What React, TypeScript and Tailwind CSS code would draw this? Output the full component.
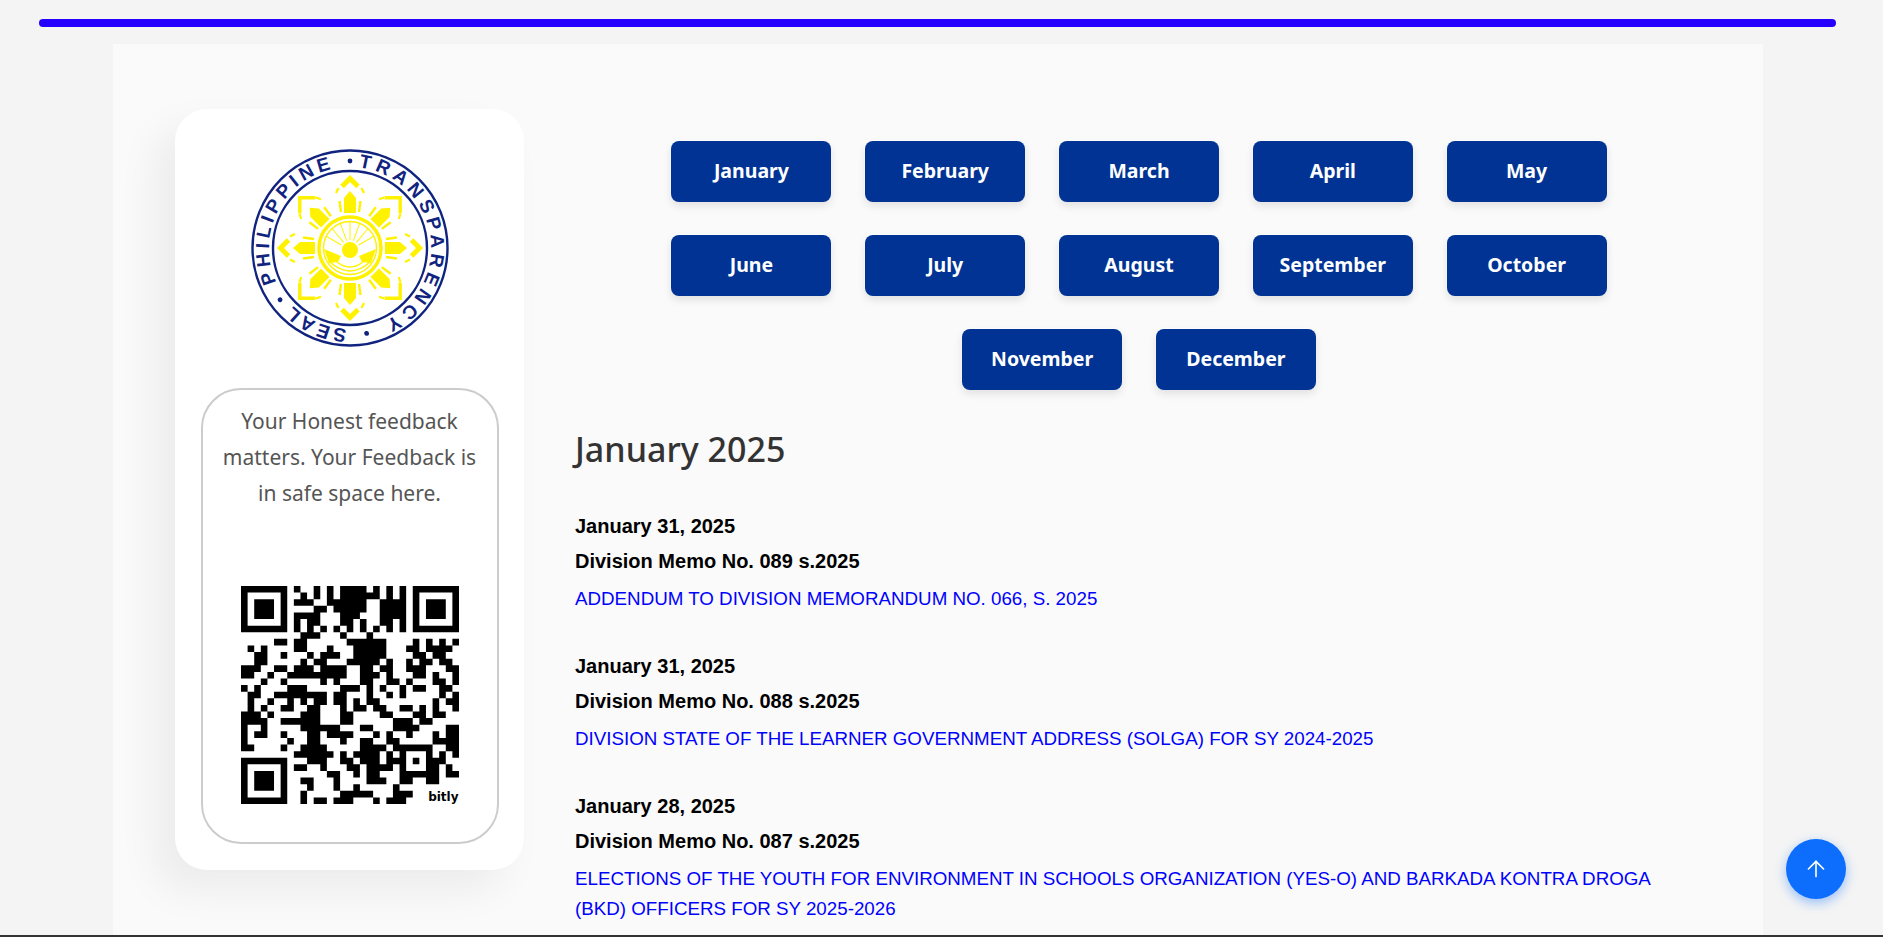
import { ArrowUp } from "lucide-react";

const months = ["January", "February", "March", "April", "May", "June", "July", "August", "September", "October", "November", "December"];

const memos = [
  { date: "January 31, 2025", no: "Division Memo No. 089 s.2025", title: "ADDENDUM TO DIVISION MEMORANDUM NO. 066, S. 2025" },
  { date: "January 31, 2025", no: "Division Memo No. 088 s.2025", title: "DIVISION STATE OF THE LEARNER GOVERNMENT ADDRESS (SOLGA) FOR SY 2024-2025" },
  { date: "January 28, 2025", no: "Division Memo No. 087 s.2025", title: "ELECTIONS OF THE YOUTH FOR ENVIRONMENT IN SCHOOLS ORGANIZATION (YES-O) AND BARKADA KONTRA DROGA (BKD) OFFICERS FOR SY 2025-2026" },
];

const qr = [
  "1111111 0 100101011110101010 1111111",
  "1000001 0 010101011111101010 1000001",
  "1011101 0 111001111110011110 1011101",
  "1011101 0 000110111110011110 1011101",
  "1011101 0 111100011100011110 1011101",
  "1000001 0 101100011010011010 1000001",
  "1111111 0 101010101010101010 1111111",
  "0000000 0 011100010001000000 0000000",
  "0000011 0 11000 00011 11110 00010 10101",
  "0101000 0 11000 10001 11110 00110 11110",
  "0011001 0 00101 11001 11110 00011 01100",
  "0011000 0 01011 00011 11101 00101 10110",
  "1110011 0 11101 11100 11011 00111 00011",
  "1100100 1 11111 11100 11101 00011 01001",
  "0001001 0 00001 01000 11001 10100 01101",
  "1010000 1 11000 00111 01010 01011 00110",
  "0110011 1 11111 01100 01001 01000 00101",
  "0100100 1 01011 01101 01100 00000 01011",
  "0101001 1 00110 00101 10110 01101 01001",
  "1110100 0 01110 00110 00011 00011 01100",
  "1111001 1 11110 00110 00000 11101 10000",
  "1001000 0 01111 11000 11000 11110 00011",
  "1011001 0 00110 11110 00101 00100 01011",
  "1000000 1 00110 00100 11001 10000 01111",
  "1100001 0 01111 00000 11110 11111 10011",
  "0000000 0 11111 10101 11101 01000 10101",
  "1111111 0 00111 00110 11101 11010 11100",
  "1000001 0 11001 00011 01111 01000 11010",
  "1011101 0 00000 11001 01100 01111 11011",
  "1011101 0 01100 01000 01110 01100 11000",
  "1011101 0 00100 01001 00000 10000 00000",
  "1000001 0 01000 00111 11000 11100 00000",
  "1111111 0 01011 01110 00101 11000 00000",
].map((row) => row.replace(/ /g, ""));

// one path so neighbouring modules don't show seams
const qrPath = qr
  .map((row, y) => {
    let d = "";
    row.replace(/1+/g, (run, x: number) => {
      d += `M${x} ${y}h${run.length}v1h-${run.length}z`;
      return run;
    });
    return d;
  })
  .join("");

function QrCode() {
  return (
    <div className="relative h-[218px] w-[218px]">
      <svg viewBox="0 0 33 33" className="h-full w-full">
        <path d={qrPath} fill="#000" />
      </svg>
      <span className="absolute right-0 bottom-[1px] font-['DejaVu_Sans',sans-serif] text-[12px] leading-none font-bold text-black">bitly</span>
    </div>
  );
}

function Seal() {
  const navy = "#10237f";
  const yellow = "#fff200";
  const circ = 2 * Math.PI * 81;
  const at = (deg: number) => (deg / 360) * circ;
  const dots = [0, 169, 233.5];
  return (
    <svg viewBox="-100 -100 200 200" className="h-[200px] w-[200px]">
      <defs>
        <path id="seal-arc" d="M0 -81A81 81 0 1 1 0 81A81 81 0 1 1 0 -81" />
      </defs>
      <circle r="97.5" fill="none" stroke={navy} strokeWidth="2.4" />
      <circle r="77" fill="none" stroke={navy} strokeWidth="2.4" />
      <text fill={navy} fontFamily="Liberation Sans, sans-serif" fontSize="19" fontWeight="700">
        <textPath href="#seal-arc" startOffset={at(244.5)} letterSpacing="4.2">PHILIPPINE</textPath>
      </text>
      <text fill={navy} fontFamily="Liberation Sans, sans-serif" fontSize="19" fontWeight="700">
        <textPath href="#seal-arc" startOffset={at(6)} letterSpacing="4.7">TRANSPARENCY</textPath>
      </text>
      <text fill={navy} fontFamily="Liberation Sans, sans-serif" fontSize="19" fontWeight="700">
        <textPath href="#seal-arc" startOffset={at(182)} letterSpacing="3">SEAL</textPath>
      </text>
      {dots.map((a) => (
        <circle key={a} r="2.4" cy="-87" fill={navy} transform={`rotate(${a})`} />
      ))}
      <g fill={yellow}>
        {[0, 45, 90, 135, 180, 225, 270, 315].map((a) => {
          const diag = a % 90 !== 0;
          return (
            <g key={a} transform={`rotate(${a})`}>
              <polygon points="-6,-35 -6,-50 0,-57 6,-50 6,-35" />
              <line x1="-9" y1="-36" x2="-10.5" y2="-47" stroke={yellow} strokeWidth="2.4" />
              <line x1="9" y1="-36" x2="10.5" y2="-47" stroke={yellow} strokeWidth="2.4" />
              <polyline
                points={diag ? "-11,-60 0,-71 11,-60" : "-8,-61.5 0,-69.5 8,-61.5"}
                fill="none"
                stroke={yellow}
                strokeWidth={diag ? 3.4 : 5}
              />
              <line x1="-14" y1="-55" x2="-11.5" y2="-60" stroke={yellow} strokeWidth="2.2" />
              <line x1="14" y1="-55" x2="11.5" y2="-60" stroke={yellow} strokeWidth="2.2" />
            </g>
          );
        })}
        <circle r="31" fill="#fff" stroke={yellow} strokeWidth="3.5" />
        <circle r="26.5" fill="none" stroke={yellow} strokeWidth="1.4" />
        <circle cy="2" r="8" />
        {[-60, -40, -20, 0, 20, 40, 60].map((a) => (
          <line key={a} x1="0" y1="-8" x2="0" y2="-26" stroke={yellow} strokeWidth="1" transform={`rotate(${a} 0 2)`} />
        ))}
        <polygon points="-26,1 -9,8 -12,14 -21,15" />
        <polygon points="26,1 9,8 12,14 21,15" />
        <path d="M-21 13Q0 33 21 13" fill="none" stroke={yellow} strokeWidth="1.5" />
        <path d="M-13 14Q0 24 13 14" fill="none" stroke={yellow} strokeWidth="1.5" />
      </g>
    </svg>
  );
}

export default function App() {
  return (
    <div className="flex h-[937px] flex-col overflow-hidden bg-[#f4f4f4]">
      <div className="mt-[19px] mr-[47px] ml-[39px] h-2 shrink-0 rounded-full bg-[#2400ff]" />
      <main className="mt-[17px] mr-[120px] ml-[113px] flex min-h-0 flex-1 overflow-hidden bg-[#fafafa] pt-[65px] pl-[62px]">
        <aside className="flex h-[761px] w-[349px] shrink-0 flex-col items-center rounded-[32px] bg-white pt-[39px] shadow-[-20px_20px_40px_rgba(0,0,0,0.06)]">
          <Seal />
          <div className="mt-[40px] flex h-[456px] w-[298px] flex-col items-center justify-between rounded-[40px] border-2 border-[#cccccc] px-4 pt-[13px] pb-[38px]">
            <p className="text-center font-['Noto_Sans',sans-serif] text-[21px] leading-[36px] text-[#555555]">
              Your Honest feedback matters. Your Feedback is in safe space here.
            </p>
            <QrCode />
          </div>
        </aside>
        <section className="ml-[51px] w-[1128px] shrink-0 pt-[32px]">
          <div className="flex flex-wrap justify-center gap-x-[33.8px] gap-y-[33px]">
            {months.map((m) => (
              <button key={m} className="h-[61px] w-[160px] rounded-lg bg-[#003393] pb-[2px] font-['Noto_Sans',sans-serif] text-[19.5px] font-bold text-white shadow-[0_4px_8px_rgba(0,0,0,0.1),-1px_-1px_0_#ffffff]">
                {m}
              </button>
            ))}
          </div>
          <h2 className="mt-[37px] mb-[38px] font-['Noto_Sans',sans-serif] text-[34px] leading-[44px] font-medium text-[#333333]">January 2025</h2>
          <div className="flex flex-col gap-[35px] font-['Liberation_Sans',sans-serif]">
            {memos.map((memo) => (
              <article key={memo.no}>
                <p className="text-[20px] leading-[35px] font-bold text-black">{memo.date}</p>
                <p className="text-[20px] leading-[35px] font-bold text-black">{memo.no}</p>
                <a href="#" className="mt-[5px] block text-[18.75px] leading-[30px] text-[#0000ff]">{memo.title}</a>
              </article>
            ))}
          </div>
        </section>
      </main>
      <div className="h-[2px] shrink-0 bg-[#333333]" />
      <button className="fixed right-[37px] bottom-[38px] flex h-[60px] w-[60px] items-center justify-center rounded-full bg-[#0d6efd] text-white shadow-[0_4px_12px_rgba(13,110,253,0.4)]">
        <ArrowUp size={26} strokeWidth={1.5} />
      </button>
    </div>
  );
}
